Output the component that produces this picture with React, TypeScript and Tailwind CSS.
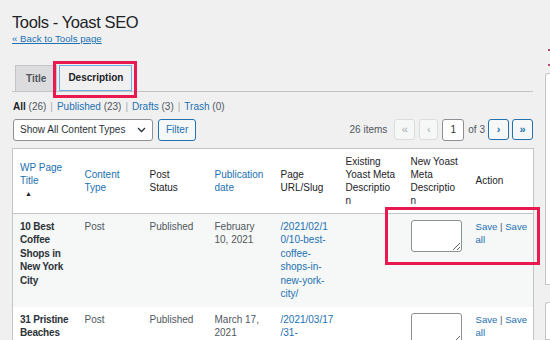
import React from 'react';

const cols = ['w-[65px]', 'w-[65px]', 'w-[65px]', 'w-[66px]', 'w-[65px]', 'w-[65px]', 'w-[65px]', 'w-[65px]'];

interface RowProps {
    title: string;
    date: string;
    urlLines: string[];
    striped?: boolean;
}

const Row: React.FC<RowProps> = ({ title, date, urlLines, striped }) => {
    return (
        <tr className={striped ? 'bg-[#f6f7f7]' : 'bg-white'}>
            <td className="align-top px-[7px] py-[6px] font-bold tracking-[-0.2px] text-[#2c3338]">{title}</td>
            <td className="align-top px-[7px] py-[6px] text-[#50575e]">Post</td>
            <td className="align-top px-[7px] py-[6px] text-[#50575e]">Published</td>
            <td className="align-top px-[7px] py-[6px] text-[#50575e]">{date}</td>
            <td className="align-top px-[7px] py-[6px] text-[#2271b1] whitespace-nowrap">
                {urlLines.map((l, i) => (
                    <div key={i}>{l}</div>
                ))}
            </td>
            <td className="align-top px-[7px] py-[6px]"></td>
            <td className="align-top px-[7px] py-[6px]">
                <textarea
                    readOnly
                    className="block w-[51px] h-[32px] bg-white border border-[#8c8f94] rounded-[3px] outline-none"
                />
            </td>
            <td className="align-top px-[7px] py-[6px] text-[#2271b1]">
                <div className="whitespace-nowrap text-[9.6px]">
                    Save <span className="text-[#50575e]">|</span> Save
                </div>
                <div className="text-[9.6px]">all</div>
            </td>
        </tr>
    );
};

const PagerButton: React.FC<{ label: string; active?: boolean; className?: string }> = ({ label, active, className }) => (
    <span
        className={
            'h-[21px] flex items-center justify-center rounded-[3px] border text-[11px] ' +
            (active
                ? 'border-[#2271b1] text-[#2271b1] bg-[#f6f7f7] font-bold '
                : 'border-[#dcdcde] text-[#a7aaad] bg-[#f6f7f7] ') +
            (className ?? '')
        }
    >
        {label}
    </span>
);

export default function App() {
    return (
        <div className="relative w-[550px] h-[340px] overflow-hidden bg-[#f0f0f1] flex font-['Liberation_Sans',Arial,sans-serif] text-[10px] leading-[13.5px] text-[#1d2327]">
            <div className="w-[533px] shrink-0 pl-3 flex flex-col">
                <h1 className="mt-[12px] text-[16.5px] leading-[20px] tracking-[-0.4px] text-[#1d2327]">Tools - Yoast SEO</h1>
                <a className="mt-[1px] text-[9.7px] leading-[12px] text-[#2271b1] underline">« Back to Tools page</a>

                {/* tabs */}
                <div className="mt-[20px] flex items-end gap-[2px] pl-[3px] border-b border-[#c3c4c7] h-[27px]">
                    <span className="h-[26px] px-[10px] flex items-center bg-[#dcdcde] border border-[#c3c4c7] border-b-0 font-bold text-[#50575e]">
                        Title
                    </span>
                    <span className="h-[26px] px-[8px] flex items-center bg-[#f0f0f1] border border-[#72aee6] font-bold text-[#1d2327]">
                        Description
                    </span>
                </div>

                {/* status links */}
                <div className="mt-[8px] flex items-center gap-[4px] text-[#50575e] pl-[1px]">
                    <span><b className="text-[#1d2327]">All</b> (26)</span>
                    <span className="text-[#a7aaad]">|</span>
                    <span><span className="text-[#2271b1]">Published</span> (23)</span>
                    <span className="text-[#a7aaad]">|</span>
                    <span><span className="text-[#2271b1]">Drafts</span> (3)</span>
                    <span className="text-[#a7aaad]">|</span>
                    <span><span className="text-[#2271b1]">Trash</span> (0)</span>
                </div>

                {/* filters + pager */}
                <div className="mt-[5px] flex items-center">
                    <div className="ml-[1px] w-[140px] h-[22px] pl-[6px] pr-[6px] flex items-center justify-between bg-white border border-[#8c8f94] rounded-[3px] text-[#2c3338]">
                        <span>Show All Content Types</span>
                        <svg width="9" height="6" viewBox="0 0 9 6" fill="none" stroke="#2c3338" strokeWidth="1.3">
                            <path d="M1 1l3.5 3.5L8 1" />
                        </svg>
                    </div>
                    <span className="ml-[5px] h-[22px] px-[7px] flex items-center rounded-[3px] border border-[#2271b1] text-[#2271b1] bg-[#f6f7f7]">
                        Filter
                    </span>
                    <div className="ml-auto flex items-center text-[#50575e]">
                        <span className="mr-[7px]">26 items</span>
                        <PagerButton label="«" className="w-[21px]" />
                        <PagerButton label="‹" className="ml-[4px] w-[19px]" />
                        <span className="ml-[4px] w-[22px] h-[22px] flex items-center justify-center bg-white border border-[#8c8f94] rounded-[3px] text-[#2c3338]">1</span>
                        <span className="ml-[4px]">of 3</span>
                        <PagerButton label="›" active className="ml-[3px] w-[21px]" />
                        <PagerButton label="»" active className="ml-[3px] w-[21px]" />
                    </div>
                </div>

                {/* table */}
                <table className="mt-[7px] w-[521px] table-fixed border-collapse border border-[#c3c4c7] bg-white">
                    <colgroup>
                        {cols.map((c, i) => (
                            <col key={i} className={c} />
                        ))}
                    </colgroup>
                    <thead className="leading-[13px]">
                        <tr className="border-b border-[#c3c4c7]">
                            <th className="align-middle text-left font-normal px-[7px] py-[6px] text-[#2271b1]">
                                WP Page Title
                                <div className="text-[#1d2327] text-[7px] leading-[13px] pl-[5px]">▲</div>
                            </th>
                            <th className="align-middle text-left font-normal px-[7px] py-[6px] text-[#2271b1]">Content Type</th>
                            <th className="align-middle text-left font-normal px-[7px] py-[6px]">Post Status</th>
                            <th className="align-middle text-left font-normal px-[7px] py-[6px] text-[#2271b1]">Publication date</th>
                            <th className="align-middle text-left font-normal px-[7px] py-[6px]">Page URL/Slug</th>
                            <th className="align-middle text-left font-normal px-[7px] py-[6px]">
                                Existing Yoast Meta Descriptio<br />n
                            </th>
                            <th className="align-middle text-left font-normal px-[7px] py-[6px]">
                                New Yoast Meta Descriptio<br />n
                            </th>
                            <th className="align-middle text-left font-normal px-[7px] py-[6px]">Action</th>
                        </tr>
                    </thead>
                    <tbody>
                        <Row
                            striped
                            title="10 Best Coffee Shops in New York City"
                            date="February 10, 2021"
                            urlLines={['/2021/02/1', '0/10-best-', 'coffee-', 'shops-in-', 'new-york-', 'city/']}
                        />
                        <Row
                            title="31 Pristine Beaches"
                            date="March 17, 2021"
                            urlLines={['/2021/03/17', '/31-', 'pristine-', 'beaches/']}
                        />
                    </tbody>
                </table>
            </div>

            {/* side panels, cut off at the right edge */}
            <div className="ml-3 flex-1 flex flex-col">
                <span className="mt-[49px] ml-[3px] w-[3px] h-[2px] bg-[#c2457e]" />
                <span className="mt-[13px] ml-[3px] w-[3px] h-[2px] bg-[#c2457e]" />
                <div className="mt-[7px] h-[226px] bg-white border border-[#c3c4c7] border-r-0 rounded-tl-[3px]" />
                <div className="mt-[17px] h-[40px] bg-white border border-[#c3c4c7] border-r-0 rounded-tl-[3px]" />
            </div>

            {/* highlight annotations */}
            <div className="absolute left-[53px] top-[61px] w-[84px] h-[37px] border-[3px] border-[#e8194f]" />
            <div className="absolute left-[385px] top-[207px] w-[155px] h-[58px] border-[3px] border-[#e8194f]" />
        </div>
    );
}
